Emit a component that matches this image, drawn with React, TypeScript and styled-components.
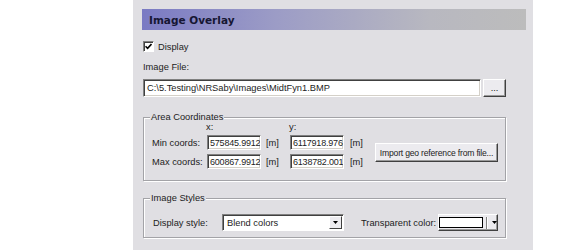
import styled, { createGlobalStyle } from 'styled-components'

const GlobalStyle = createGlobalStyle`
  html, body {
    margin: 0;
    padding: 0;
    background: #ffffff;
  }
  body {
    font-family: 'Liberation Sans', Arial, sans-serif;
    font-size: 9.3px;
    color: #1c1c1c;
  }
`

const Page = styled.div`
  display: flex;
  padding-left: 133px;
`
const Panel = styled.div`
  width: 400px;
  height: 250px;
  box-sizing: border-box;
  background: #e0dfe3;
  padding: 9px 7px 0 9px;
  display: flex;
  flex-direction: column;
`
const Header = styled.div`
  height: 21px;
  display: flex;
  align-items: center;
  padding-left: 7px;
  background: linear-gradient(to right, #7a7ac3 0%, #9c9cc6 35%, #b8b8c0 75%, #bcbcbc 100%);
  font-family: 'DejaVu Sans', Verdana, sans-serif;
  font-weight: bold;
  font-size: 10.5px;
  color: #161633;
`
const Body = styled.div`
  display: flex;
  flex-direction: column;
  padding: 0 20px 0 1px;
`
const CheckRow = styled.label`
  margin-top: 11px;
  height: 11px;
  display: flex;
  align-items: center;
  gap: 4px;
`
const CheckBox = styled.span`
  width: 9px;
  height: 9px;
  background: #fff;
  border: 1px solid;
  border-color: #7f7f7f #ffffff #ffffff #7f7f7f;
  box-shadow: inset 1px 1px 0 #404040;
  display: flex;
  align-items: center;
  justify-content: center;
  svg {
    width: 7px;
    height: 7px;
  }
`
const FieldLabel = styled.div`
  margin-top: 10px;
  height: 11px;
  line-height: 11px;
`
const FileRow = styled.div`
  margin-top: 6px;
  display: flex;
  gap: 2px;
  height: 18px;
`
const TextBox = styled.div<{ $w?: number; $h?: number; $small?: boolean }>`
  box-sizing: border-box;
  width: ${(p) => (p.$w ? `${p.$w}px` : 'auto')};
  flex: ${(p) => (p.$w ? 'none' : '1')};
  height: ${(p) => p.$h ?? 18}px;
  background: #fff;
  border: 1px solid;
  border-color: #808080 #ffffff #ffffff #808080;
  box-shadow: inset 1px 1px 0 #404040, inset -1px -1px 0 #d4d0c8;
  display: flex;
  align-items: center;
  padding-left: ${(p) => (p.$small ? 2 : 3)}px;
  font-size: ${(p) => (p.$small ? '9px' : 'inherit')};
  letter-spacing: ${(p) => (p.$small ? '-0.2px' : 'normal')};
  overflow: hidden;
  white-space: nowrap;
`
const Button = styled.div<{ $w: number; $h: number }>`
  box-sizing: border-box;
  width: ${(p) => p.$w}px;
  height: ${(p) => p.$h}px;
  background: #ecebef;
  border: 1px solid;
  border-color: #ffffff #404040 #404040 #ffffff;
  box-shadow: inset -1px -1px 0 #9a9a9a;
  display: flex;
  align-items: center;
  justify-content: center;
  flex: none;
  white-space: nowrap;
`
const ImportButton = styled(Button)`
  align-self: flex-start;
  margin-top: 19px;
  font-size: 8.6px;
  letter-spacing: -0.2px;
`
const Group = styled.div<{ $top: number; $h: number }>`
  position: relative;
  box-sizing: border-box;
  margin-top: ${(p) => p.$top}px;
  height: ${(p) => p.$h}px;
  border: 1px solid #a3a3a7;
  box-shadow: inset 1px 1px 0 #ffffff, 1px 1px 0 #ffffff;
`
const Legend = styled.span`
  position: absolute;
  top: -6px;
  left: 6px;
  padding: 0 1px;
  background: #e0dfe3;
  line-height: 11px;
`
const AreaBody = styled.div`
  display: flex;
  padding: 6px 0 0 8px;
`
const CoordGrid = styled.div`
  display: grid;
  grid-template-columns: 55px 54px 29px 54px 31px;
  grid-template-rows: 7px 15px 15px;
  row-gap: 4px;
  align-items: center;
`
const AxisHead = styled.div`
  line-height: 7px;
  margin-left: -1px;
`
const Unit = styled.span<{ $pad: number }>`
  padding-left: ${(p) => p.$pad}px;
`
const StyleRow = styled.div`
  display: flex;
  align-items: center;
  padding: 15px 0 0 9px;
`
const RowLabel = styled.span<{ $w: number; $pad?: number }>`
  box-sizing: border-box;
  width: ${(p) => p.$w}px;
  padding-left: ${(p) => p.$pad ?? 0}px;
  flex: none;
  white-space: nowrap;
`
const Select = styled.div`
  box-sizing: border-box;
  width: 122px;
  height: 17px;
  background: #fff;
  border: 1px solid;
  border-color: #808080 #ffffff #ffffff #808080;
  box-shadow: inset 1px 1px 0 #404040;
  display: flex;
  align-items: center;
  padding: 1px 1px 1px 4px;
  justify-content: space-between;
`
const ArrowBtn = styled.span`
  box-sizing: border-box;
  width: 13px;
  height: 13px;
  background: #ecebef;
  border: 1px solid;
  border-color: #ffffff #404040 #404040 #ffffff;
  display: flex;
  align-items: center;
  justify-content: center;
`
const Swatch = styled.span`
  width: 42px;
  height: 9px;
  background: #fff;
  border: 1px solid #000;
`
const ColorInner = styled.span`
  display: flex;
  align-items: center;
  gap: 2px;
`
const Divider = styled.span`
  width: 1px;
  height: 12px;
  background: #808080;
  box-shadow: 1px 0 0 #fff;
  margin: 0 3px 0 1px;
`

const Arrow = () => (
  <svg width="5" height="3" viewBox="0 0 5 3">
    <path d="M0 0h5L2.5 3z" fill="#000" />
  </svg>
)

export default function App() {
  return (
    <>
      <GlobalStyle />
      <Page>
        <Panel>
          <Header>Image Overlay</Header>
          <Body>
            <CheckRow>
              <CheckBox>
                <svg viewBox="0 0 7 7">
                  <path d="M0.5 3.2 L2.6 5.4 L6.5 1" stroke="#000" strokeWidth="1.6" fill="none" />
                </svg>
              </CheckBox>
              Display
            </CheckRow>
            <FieldLabel>Image File:</FieldLabel>
            <FileRow>
              <TextBox>C:\5.Testing\NRSaby\Images\MidtFyn1.BMP</TextBox>
              <Button $w={23} $h={18}>...</Button>
            </FileRow>
            <Group $top={20} $h={64}>
              <Legend>Area Coordinates</Legend>
              <AreaBody>
                <CoordGrid>
                  <div />
                  <AxisHead>x:</AxisHead>
                  <div />
                  <AxisHead>y:</AxisHead>
                  <div />
                  <span>Min coords:</span>
                  <TextBox $w={54} $h={15} $small>575845.9912</TextBox>
                  <Unit $pad={5}>[m]</Unit>
                  <TextBox $w={54} $h={15} $small>6117918.9763</TextBox>
                  <Unit $pad={6}>[m]</Unit>
                  <span>Max coords:</span>
                  <TextBox $w={54} $h={15} $small>600867.9912</TextBox>
                  <Unit $pad={5}>[m]</Unit>
                  <TextBox $w={54} $h={15} $small>6138782.0014</TextBox>
                  <Unit $pad={6}>[m]</Unit>
                </CoordGrid>
                <ImportButton $w={123} $h={19}>Import geo reference from file...</ImportButton>
              </AreaBody>
            </Group>
            <Group $top={17} $h={40}>
              <Legend>Image Styles</Legend>
              <StyleRow>
                <RowLabel $w={69}>Display style:</RowLabel>
                <Select>
                  Blend colors
                  <ArrowBtn>
                    <Arrow />
                  </ArrowBtn>
                </Select>
                <RowLabel $w={94} $pad={17}>
                  Transparent color:
                </RowLabel>
                <Button $w={60} $h={17}>
                  <ColorInner>
                    <Swatch />
                    <Divider />
                    <Arrow />
                  </ColorInner>
                </Button>
              </StyleRow>
            </Group>
          </Body>
        </Panel>
      </Page>
    </>
  )
}
